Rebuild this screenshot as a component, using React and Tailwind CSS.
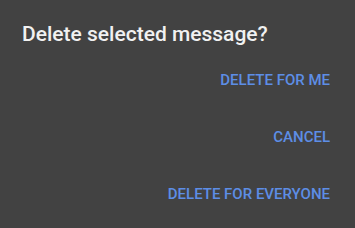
export default function App() {
  return (
    <div className="w-[355px] h-[228px] bg-[#424242] flex flex-col overflow-hidden relative" style={{ fontFamily: "Roboto, 'Noto Sans', sans-serif" }}>
      <div className="pt-[20px] pl-[22px] text-[21px] leading-[28px] font-medium text-[#f1f1f1]">Delete selected message?</div>
      <div className="flex flex-col items-end pr-[25px] mt-[4px]">
        <div className="h-[57px] flex items-center text-[15px] font-medium text-[#5d8ee6]">DELETE FOR ME</div>
        <div className="h-[57px] flex items-center text-[15px] font-medium text-[#5d8ee6]">CANCEL</div>
        <div className="h-[57px] flex items-center text-[15px] font-medium text-[#5d8ee6]">DELETE FOR EVERYONE</div>
      </div>
    </div>
  );
}
